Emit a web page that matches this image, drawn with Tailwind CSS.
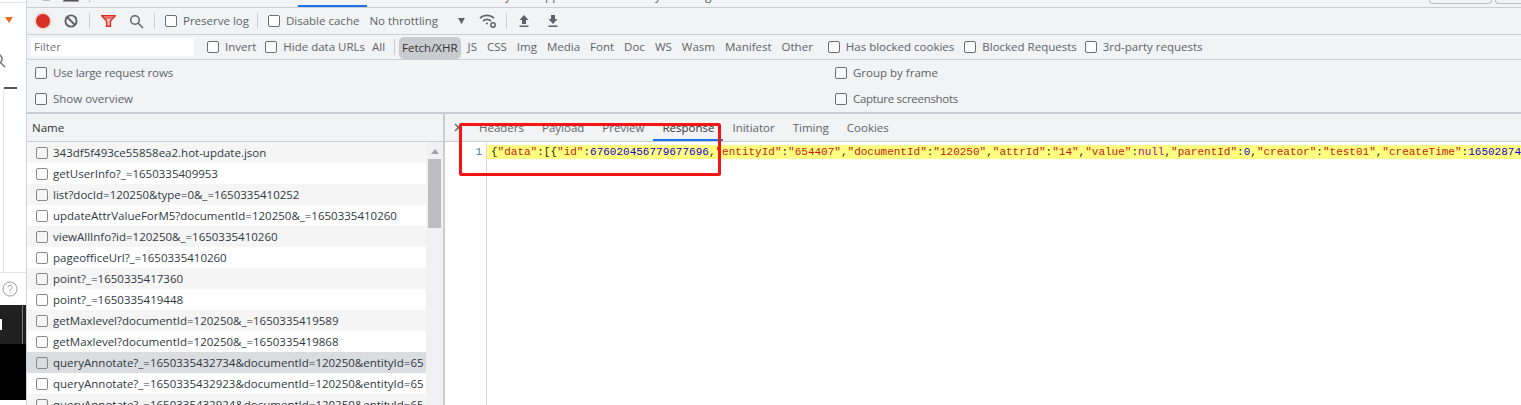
<!doctype html>
<html>
<head>
<meta charset="utf-8">
<script src="https://cdn.jsdelivr.net/npm/@tailwindcss/browser@4"></script>
</head>
<body class="m-0 overflow-hidden bg-white">
<div class="relative flex h-[405px] w-[1521px] overflow-hidden font-['Open_Sans',sans-serif] text-[11.5px] text-[#5f6368]">

  <!-- page behind devtools -->
  <aside class="relative flex h-full w-[27px] shrink-0 flex-col overflow-hidden border-r border-[#d0d2d6] bg-white">
    <div class="h-[3px] shrink-0 border-b border-[#dfe1e5]"></div>
    <div class="flex h-[49px] shrink-0 pl-[5px] pt-[14px]">
      <svg class="h-[6px] w-[8px]" viewBox="0 0 8 6"><path d="M0 0h8L4 6z" fill="#f26b1d"/></svg>
    </div>
    <svg class="-ml-[10px] h-[16px] w-[16px] shrink-0" viewBox="0 0 16 16" fill="none" stroke="#777" stroke-width="1.6"><circle cx="7" cy="7" r="5"/><path d="M11 11l4 4"/></svg>
    <div class="ml-[3px] mt-[19px] h-[185px] shrink-0 border-l border-[#e6e6e6]">
      <div class="h-[2px] w-[13px] bg-[#555]"></div>
    </div>
    <div class="flex h-[33px] shrink-0 items-center border-t border-[#e5e5e5] pl-[2px]">
      <svg class="h-[16px] w-[16px]" viewBox="0 0 17 17" fill="none" stroke="#999" stroke-width="1"><circle cx="8.5" cy="8.5" r="7.5"/><path d="M6.3 6.8a2.2 2.2 0 1 1 3.4 1.9c-.8.5-1.2 1-1.2 1.9"/><path d="M8.5 12v1.2"/></svg>
    </div>
    <div class="flex h-[39px] shrink-0 items-center justify-between bg-[#202020] pr-[3px]">
      <div class="h-[11px] w-[2px] border border-white"></div>
      <div class="h-full w-px bg-[#777]"></div>
    </div>
    <div class="h-[56px] shrink-0 bg-black"></div>
  </aside>

  <main class="flex min-w-0 flex-1 flex-col bg-[#f1f3f4]">
    <!-- clipped tab bar -->
    <div class="relative h-[8px] shrink-0 overflow-hidden border-b border-[#cacdd1]">
      <div class="absolute left-[16px] top-0 h-px w-[7px] bg-[#bbb]"></div>
      <div class="absolute left-[36px] top-0 h-[2px] w-[16px] border-x border-b border-[#999] bg-[#555]"></div>
      <div class="absolute left-[62px] top-0 h-[2px] w-px bg-[#bbb]"></div>
      <div class="absolute left-[271px] bottom-0 h-[2px] w-[69px] bg-[#1a73e8]"></div>
      <span class="absolute left-[478px] -top-[13px] text-[12px] text-[#666]">y</span>
      <span class="absolute left-[518px] -top-[13px] text-[12px] text-[#666]">pp</span>
      <span class="absolute left-[628px] -top-[13px] text-[12px] text-[#666]">y</span>
      <span class="absolute left-[678px] -top-[13px] text-[12px] text-[#666]">g</span>
      <div class="absolute left-[1402px] top-0 h-[4px] w-[63px] rounded-b-sm border-x border-b border-[#bdbdbd]"></div>
      <div class="absolute left-[1468px] top-0 h-[4px] w-[30px] rounded-b-sm border-x border-b border-[#bdbdbd]"></div>
    </div>

    <!-- toolbar -->
    <div class="flex h-[27px] shrink-0 items-center border-b border-[#cacdd1] pl-[9px]">
      <span class="h-[14px] w-[14px] shrink-0 rounded-full bg-[#d93025] shadow-[0_0_3px_#d9302580]"></span>
      <svg class="ml-[14px] h-[14px] w-[14px] shrink-0" viewBox="0 0 14 14" fill="none" stroke="#5f6368" stroke-width="1.9"><circle cx="7" cy="7" r="5.6"/><path d="M3 3l8 8"/></svg>
      <span class="ml-[11px] h-[16px] w-px shrink-0 bg-[#cacdd1]"></span>
      <svg class="ml-[11px] h-[12px] w-[15px] shrink-0" viewBox="0 0 15 12" fill="#f6c7c4" stroke="#d93025" stroke-width="1.5"><path d="M.8.800h13.400L9.400 6v5.200H5.600V6z"/><path d="M3.500 3h8" stroke-width="1.2"/></svg>
      <svg class="ml-[13px] h-[15px] w-[15px] shrink-0" viewBox="0 0 15 15" fill="none" stroke="#5f6368" stroke-width="1.5"><circle cx="6" cy="6" r="4.300"/><path d="M9.200 9.200l4.800 4.800"/></svg>
      <span class="ml-[10px] h-[16px] w-px shrink-0 bg-[#cacdd1]"></span>
      <label class="ml-[10px] flex items-center gap-[6px]"><span class="h-[12px] w-[12px] rounded-[2px] border border-[#6b6e72] bg-white"></span>Preserve log</label>
      <span class="ml-[8px] h-[16px] w-px shrink-0 bg-[#cacdd1]"></span>
      <label class="ml-[10px] flex items-center gap-[6px]"><span class="h-[12px] w-[12px] rounded-[2px] border border-[#6b6e72] bg-white"></span>Disable cache</label>
      <span class="ml-[10px]">No throttling</span>
      <svg class="ml-[19px] h-[8px] w-[9px] shrink-0" viewBox="0 0 9 8"><path d="M1 1h7L4.500 7z" fill="#5f6368"/></svg>
      <svg class="ml-[13px] h-[16px] w-[18px] shrink-0" viewBox="0 0 18 16" fill="none" stroke="#5f6368" stroke-width="1.700"><path d="M1 5c4-3.500 10-3.500 14 0"/><path d="M4 8c2.500-2 5.500-2 8 0"/><circle cx="8" cy="10.500" r="1" fill="#5f6368" stroke="none"/><circle cx="14" cy="12" r="2.200" stroke-width="1.500"/></svg>
      <span class="ml-[9px] h-[16px] w-px shrink-0 bg-[#cacdd1]"></span>
      <svg class="ml-[11px] h-[14px] w-[12px] shrink-0" viewBox="0 0 12 14"><path d="M6 1l4.500 5H8v4H4V6H1.500zM1.500 11.500h9V13h-9z" fill="#5f6368"/></svg>
      <svg class="ml-[17px] h-[14px] w-[12px] shrink-0" viewBox="0 0 12 14"><path d="M4 1h4v4h2.500L6 10 1.500 5H4zM1.500 11.500h9V13h-9z" fill="#5f6368"/></svg>
    </div>

    <!-- filter row -->
    <div class="flex h-[25px] shrink-0 items-center border-b border-[#cacdd1] pl-[4px]">
      <div class="flex h-[18px] w-[163px] shrink-0 items-center bg-white pl-[3px] text-[#757575]">Filter</div>
      <label class="ml-[13px] flex items-center gap-[6px]"><span class="h-[12px] w-[12px] rounded-[2px] border border-[#6b6e72] bg-white"></span>Invert</label>
      <label class="ml-[9px] flex items-center gap-[6px]"><span class="h-[12px] w-[12px] rounded-[2px] border border-[#6b6e72] bg-white"></span>Hide data URLs</label>
      <span class="ml-[7px]">All</span>
      <span class="ml-[9px] h-[16px] w-px shrink-0 bg-[#cacdd1]"></span>
      <span class="ml-[4px] flex h-[22px] items-center self-end rounded-[5px] bg-[#c9cbcf] px-[3px] text-[#333]">Fetch/XHR</span>
      <nav class="ml-[7px] flex items-center gap-[10px]"><span>JS</span><span>CSS</span><span>Img</span><span>Media</span><span>Font</span><span>Doc</span><span>WS</span><span>Wasm</span><span>Manifest</span><span>Other</span></nav>
      <label class="ml-[15px] flex items-center gap-[6px]"><span class="h-[12px] w-[12px] rounded-[2px] border border-[#6b6e72] bg-white"></span>Has blocked cookies</label>
      <label class="ml-[10px] flex items-center gap-[6px]"><span class="h-[12px] w-[12px] rounded-[2px] border border-[#6b6e72] bg-white"></span>Blocked Requests</label>
      <label class="ml-[8px] flex items-center gap-[6px]"><span class="h-[12px] w-[12px] rounded-[2px] border border-[#6b6e72] bg-white"></span>3rd-party requests</label>
    </div>

    <!-- settings -->
    <div class="grid h-[54px] shrink-0 grid-cols-[800px_1fr] grid-rows-2 border-b-2 border-[#cacdd1] pl-[8px]">
      <label class="flex items-center gap-[6px] tracking-[-0.15px]"><span class="h-[12px] w-[12px] rounded-[2px] border border-[#6b6e72] bg-[#f8f9fa]"></span>Use large request rows</label>
      <label class="flex items-center gap-[6px]"><span class="h-[12px] w-[12px] rounded-[2px] border border-[#6b6e72] bg-[#f8f9fa]"></span>Group by frame</label>
      <label class="flex items-center gap-[6px]"><span class="h-[12px] w-[12px] rounded-[2px] border border-[#6b6e72] bg-[#f8f9fa]"></span>Show overview</label>
      <label class="flex items-center gap-[6px] tracking-[-0.3px]"><span class="h-[12px] w-[12px] rounded-[2px] border border-[#6b6e72] bg-[#f8f9fa]"></span>Capture screenshots</label>
    </div>

    <!-- split -->
    <div class="flex min-h-0 flex-1">
      <section class="flex w-[418px] shrink-0 flex-col border-r-2 border-[#cacdd1]">
        <div class="flex h-[28px] shrink-0 items-center border-b border-[#cacdd1] pl-[5px] text-[#333]">Name</div>
        <div class="flex min-h-0 flex-1 overflow-hidden">
          <ul class="min-w-0 flex-1 overflow-hidden text-[#303942]">
            <li class="flex h-[21px] items-center whitespace-nowrap bg-[#f5f5f5] pl-[9px]"><span class="mr-[5px] h-[12px] w-[12px] shrink-0 rounded-[2px] border border-[#888]"></span>343df5f493ce55858ea2.hot-update.json</li>
            <li class="flex h-[21px] items-center whitespace-nowrap bg-white pl-[9px]"><span class="mr-[5px] h-[12px] w-[12px] shrink-0 rounded-[2px] border border-[#888]"></span>getUserInfo?_=1650335409953</li>
            <li class="flex h-[21px] items-center whitespace-nowrap bg-[#f5f5f5] pl-[9px]"><span class="mr-[5px] h-[12px] w-[12px] shrink-0 rounded-[2px] border border-[#888]"></span>list?docId=120250&amp;type=0&amp;_=1650335410252</li>
            <li class="flex h-[21px] items-center whitespace-nowrap bg-white pl-[9px]"><span class="mr-[5px] h-[12px] w-[12px] shrink-0 rounded-[2px] border border-[#888]"></span>updateAttrValueForM5?documentId=120250&amp;_=1650335410260</li>
            <li class="flex h-[21px] items-center whitespace-nowrap bg-[#f5f5f5] pl-[9px]"><span class="mr-[5px] h-[12px] w-[12px] shrink-0 rounded-[2px] border border-[#888]"></span>viewAllInfo?id=120250&amp;_=1650335410260</li>
            <li class="flex h-[21px] items-center whitespace-nowrap bg-white pl-[9px]"><span class="mr-[5px] h-[12px] w-[12px] shrink-0 rounded-[2px] border border-[#888]"></span>pageofficeUrl?_=1650335410260</li>
            <li class="flex h-[21px] items-center whitespace-nowrap bg-[#f5f5f5] pl-[9px]"><span class="mr-[5px] h-[12px] w-[12px] shrink-0 rounded-[2px] border border-[#888]"></span>point?_=1650335417360</li>
            <li class="flex h-[21px] items-center whitespace-nowrap bg-white pl-[9px]"><span class="mr-[5px] h-[12px] w-[12px] shrink-0 rounded-[2px] border border-[#888]"></span>point?_=1650335419448</li>
            <li class="flex h-[21px] items-center whitespace-nowrap bg-[#f5f5f5] pl-[9px]"><span class="mr-[5px] h-[12px] w-[12px] shrink-0 rounded-[2px] border border-[#888]"></span>getMaxlevel?documentId=120250&amp;_=1650335419589</li>
            <li class="flex h-[21px] items-center whitespace-nowrap bg-white pl-[9px]"><span class="mr-[5px] h-[12px] w-[12px] shrink-0 rounded-[2px] border border-[#888]"></span>getMaxlevel?documentId=120250&amp;_=1650335419868</li>
            <li class="flex h-[21px] items-center whitespace-nowrap bg-[#dadce0] pl-[9px]"><span class="mr-[5px] h-[12px] w-[12px] shrink-0 rounded-[2px] border border-[#888]"></span>queryAnnotate?_=1650335432734&amp;documentId=120250&amp;entityId=65</li>
            <li class="flex h-[21px] items-center whitespace-nowrap bg-white pl-[9px]"><span class="mr-[5px] h-[12px] w-[12px] shrink-0 rounded-[2px] border border-[#888]"></span>queryAnnotate?_=1650335432923&amp;documentId=120250&amp;entityId=65</li>
            <li class="flex h-[21px] items-center whitespace-nowrap bg-[#f5f5f5] pl-[9px]"><span class="mr-[5px] h-[12px] w-[12px] shrink-0 rounded-[2px] border border-[#888]"></span>queryAnnotate?_=1650335432924&amp;documentId=120250&amp;entityId=65</li>
          </ul>
          <div class="flex w-[17px] shrink-0 flex-col items-center bg-[#f1f1f1] px-[2px]">
            <svg class="mt-[7px] h-[5px] w-[8px] shrink-0" viewBox="0 0 8 5"><path d="M4 0l4 5H0z" fill="#a3a3a3"/></svg>
            <div class="mt-[5px] h-[69px] w-[13px] bg-[#bdbdbd]"></div>
          </div>
        </div>
      </section>

      <section class="flex min-w-0 flex-1 flex-col bg-white">
        <div class="flex h-[28px] shrink-0 items-center gap-[18px] border-b border-[#cacdd1] bg-[#f1f3f4] pl-[9px]">
          <svg class="-mr-[2px] h-[9px] w-[9px] shrink-0" viewBox="0 0 9 9" fill="none" stroke="#5f6368" stroke-width="1.400"><path d="M1 1l7 7M8 1l-7 7"/></svg>
          <span>Headers</span><span>Payload</span><span>Preview</span>
          <span class="relative flex h-full items-center text-[#333]">Response<i class="absolute -inset-x-[9px] bottom-0 h-[2px] bg-[#1a73e8]"></i></span>
          <span>Initiator</span><span>Timing</span><span>Cookies</span>
        </div>
        <div class="flex min-h-0 flex-1">
          <div class="w-[42px] shrink-0 border-r border-[#d9d9d9] pr-[4px] pt-[3px] text-right font-['Liberation_Mono',monospace] text-[11px] leading-[14px] text-[#4a7a9c]">1</div>
          <div class="min-w-0 flex-1 overflow-hidden pt-[3px]">
            <div class="h-[14px] whitespace-nowrap bg-[#ffff80] pl-[4px] font-['Liberation_Mono',monospace] text-[11px] leading-[14px] text-[#222]">{<span class="text-[#c41a16]">"data"</span>:[{<span class="text-[#c41a16]">"id"</span>:<span class="text-[#1c00cf]">676020456779677696</span>,<span class="text-[#c41a16]">"entityId"</span>:<span class="text-[#c41a16]">"654407"</span>,<span class="text-[#c41a16]">"documentId"</span>:<span class="text-[#c41a16]">"120250"</span>,<span class="text-[#c41a16]">"attrId"</span>:<span class="text-[#c41a16]">"14"</span>,<span class="text-[#c41a16]">"value"</span>:<span class="text-[#aa0d91]">null</span>,<span class="text-[#c41a16]">"parentId"</span>:<span class="text-[#1c00cf]">0</span>,<span class="text-[#c41a16]">"creator"</span>:<span class="text-[#c41a16]">"test01"</span>,<span class="text-[#c41a16]">"createTime"</span>:<span class="text-[#1c00cf]">16502874</span></div>
          </div>
        </div>
      </section>
    </div>
  </main>

  <!-- annotation drawn over the screenshot -->
  <div class="absolute left-[459px] top-[123px] h-[53px] w-[262px] rounded-[2px] border-[3px] border-[#f51515]"></div>
</div>
</body>
</html>
